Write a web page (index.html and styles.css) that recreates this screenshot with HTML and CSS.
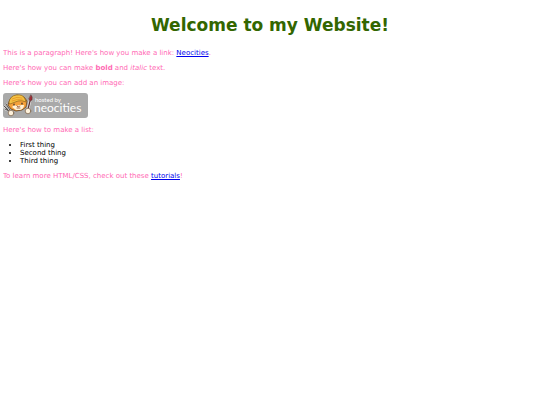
FILE: index.html
```html
<!DOCTYPE html>
<html lang="en">
<head>
<meta charset="utf-8">
<title>My Website</title>
<link rel="stylesheet" href="styles.css">
</head>
<body>
<h1>Welcome to my Website!</h1>
<p>This is a paragraph! Here's how you make a link: <a href="#neocities">Neocities</a>.</p>
<p>Here's how you can make <strong>bold</strong> and <em>italic</em> text.</p>
<p>Here's how you can add an image:</p>
<svg class="badge" viewBox="0 0 85 25" role="img" aria-label="hosted by neocities">
  <rect width="85" height="25" rx="3" fill="#a9a9a9"/>
  <g stroke-linecap="round" stroke-linejoin="round">
    <path d="M1 13l3 4 4 2M3 11l4 6M1 13l-0 2q2 3 4 2" fill="none" stroke="#ddd" stroke-width="1.4"/>
    <path d="M1 13l4 4M3 11l4 6M2 16l4 2" fill="none" stroke="#504b48" stroke-width="1"/>
    <path d="M27 8l-2 8" stroke="#eee" stroke-width="2.6"/>
    <path d="M27 8l-2 8" stroke="#593434" stroke-width="1.3"/>
    <path d="M28 2q2 2 1 5l-2 1-1-2z" fill="#a02c35" stroke="#502929" stroke-width=".5"/>
    <path d="M6 9l-1 3 3 4 5 2 6-1 4-3 1-6-3-4-7-2-6 3z" fill="#f5a13b" stroke="#67421d" stroke-width=".8"/>
    <path d="M9 14q2-3 5-1l2-1 5 0q0 4-4 5h-4z" fill="#fff1d5"/>
    <path d="M6 9Q7 3 13 2q7-1 9 4l1 3q-4-2-8-1l-8 3z" fill="#f5c243" stroke="#8e651e" stroke-width=".7"/>
    <path d="M9 6q5-3 10-1M9 8q6-3 11-1" fill="none" stroke="#e49324" stroke-width=".8"/>
    <path d="M11 11v1M19 10v1" stroke="#352a25" stroke-width="1.2"/>
    <path d="M14 13l1 1 2-1M14 15h3" fill="none" stroke="#8e4d2e" stroke-width=".8"/>
    <circle cx="8" cy="20" r="2.8" fill="#fff2dc" stroke="#755b43" stroke-width=".7"/>
    <circle cx="25" cy="18" r="2.8" fill="#fff2dc" stroke="#755b43" stroke-width=".7"/>
  </g>
  <text class="badge-small" x="32" y="9">hosted by</text>
  <text class="badge-name" x="31" y="19">neocities</text>
</svg>
<p>Here's how to make a list:</p>
<ul>
<li>First thing</li>
<li>Second thing</li>
<li>Third thing</li>
</ul>
<p>To learn more HTML/CSS, check out these <a href="#tutorials">tutorials</a>!</p>
</body>
</html>
```
FILE: styles.css
```css
body {
  margin: 13px 3px;
  background: #fff;
  color: #000;
  font: 7px/8px Verdana, "DejaVu Sans", sans-serif;
}

h1 {
  margin: 0 0 11px;
  color: #360;
  font-size: 17px;
  line-height: 25px;
  text-align: center;
}

p {
  margin: 7px 0;
  color: #ff69b4;
}

a {
  color: #00e;
}

.badge {
  display: block;
  width: 85px;
  height: 25px;
  margin: -1px 0 8px;
}

.badge text {
  fill: #fff;
  font-family: Lato, sans-serif;
}

.badge .badge-small {
  font-size: 6px;
}

.badge .badge-name {
  font-size: 12px;
}

ul {
  margin: 7px 0;
  padding-left: 17px;
}
```
